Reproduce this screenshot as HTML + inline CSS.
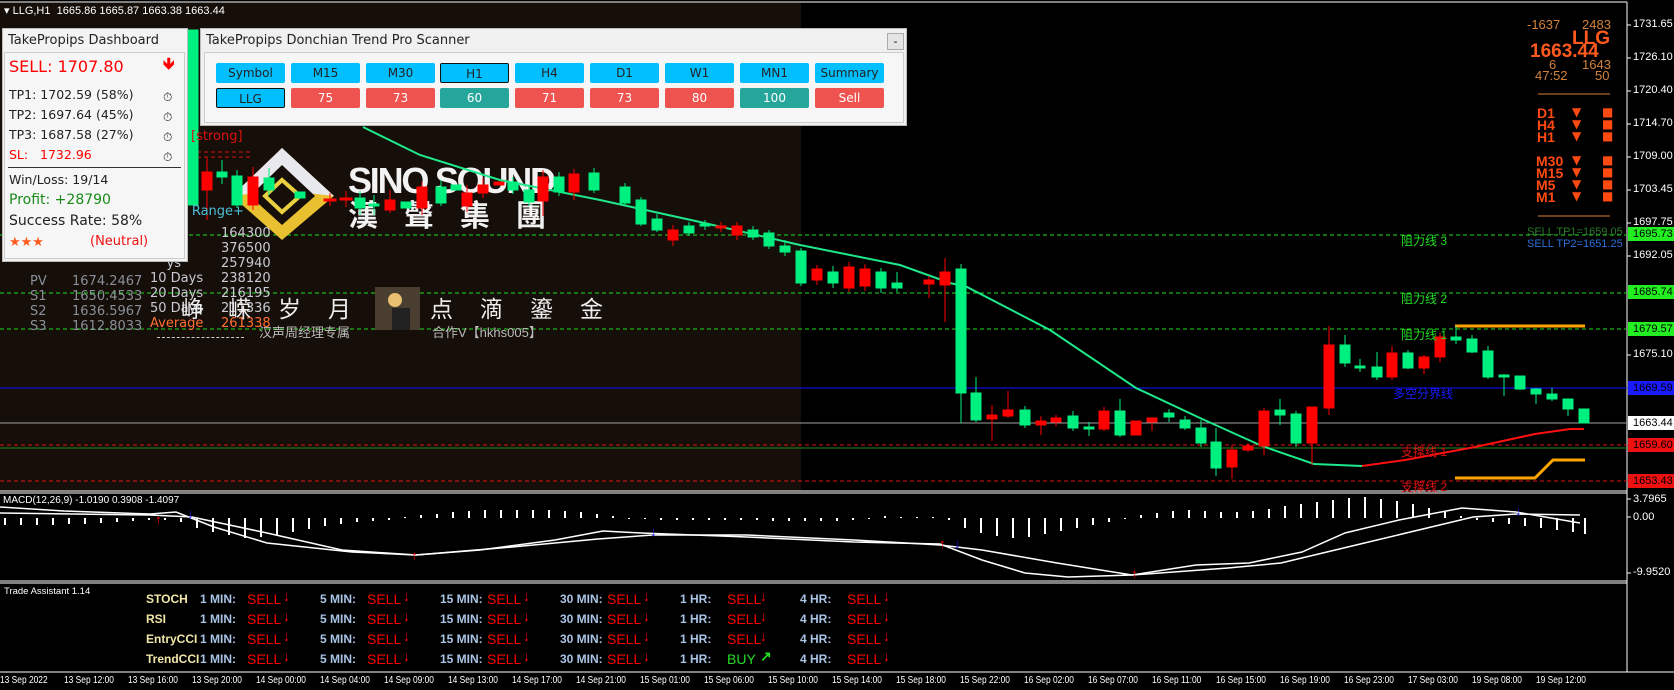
<!DOCTYPE html>
<html><head><meta charset="utf-8"><style>
*{margin:0;padding:0;box-sizing:border-box}
body{width:1674px;height:690px;background:#000;overflow:hidden;position:relative;font-family:"DejaVu Sans","Liberation Sans",sans-serif}
.a{position:absolute;white-space:nowrap;line-height:1}
.ax{font-family:"Liberation Sans",sans-serif;font-size:11px;color:#fff}
.btn{position:absolute;height:20px;width:69px;border-radius:2px;font-size:12px;text-align:center;line-height:20px;color:#222}
.b{background:#00bfff}.r{background:#ef5350;color:#fff}.t{background:#26a69a;color:#fff}
.ta{font-family:"Liberation Sans",sans-serif;font-size:12px;font-weight:bold;color:#aac4e6}
.sl{font-family:"Liberation Sans",sans-serif;font-size:14px;color:#f00}
.lb{color:#f0e6a8}
.tf{font-family:"Liberation Sans",sans-serif;font-size:14px;font-weight:bold;color:#ff4a12}
.tm span{position:absolute;transform:scaleX(0.84);transform-origin:left top}
</style></head><body>
<svg width="1674" height="690" style="position:absolute;left:0;top:0">
<rect x="0" y="3" width="801" height="488" fill="#150e09"/>
<line x1="0" y1="2" x2="1627" y2="2" stroke="#fff"/>
<line x1="1627" y1="2" x2="1627" y2="672" stroke="#fff"/>
<line x1="0" y1="491" x2="1627" y2="491" stroke="#fff"/>
<line x1="0" y1="493" x2="1627" y2="493" stroke="#fff"/>
<line x1="0" y1="581" x2="1627" y2="581" stroke="#fff"/>
<line x1="0" y1="583" x2="1627" y2="583" stroke="#fff"/>
<line x1="0" y1="672" x2="1674" y2="672" stroke="#fff"/>
<g stroke-dasharray="4,3">
<line x1="0" y1="235" x2="1627" y2="235" stroke="#22dd22"/>
<line x1="0" y1="293" x2="1627" y2="293" stroke="#22dd22"/>
<line x1="0" y1="329" x2="1627" y2="329" stroke="#22dd22"/>
<line x1="0" y1="445" x2="1627" y2="445" stroke="#e01010"/>
<line x1="0" y1="481" x2="1627" y2="481" stroke="#e01010"/>
<line x1="190" y1="152" x2="250" y2="152" stroke="#e01010"/>
<line x1="190" y1="157" x2="250" y2="157" stroke="#e01010"/>
</g>
<line x1="0" y1="388" x2="1627" y2="388" stroke="#1010ff"/>
<line x1="0" y1="423" x2="1627" y2="423" stroke="#a0a0a0"/>
<line x1="0" y1="448" x2="1627" y2="448" stroke="#1e8a1e"/>
<g>
<polygon points="282,148 334,196 282,240 232,196" fill="#e8c030"/>
<polygon points="282,148 334,196 282,190 232,196" fill="#e8e8ee"/>
<polygon points="282,165 315,196 282,225 250,196" fill="#150e09"/>
<polygon points="282,180 300,196 282,212 265,196" fill="none" stroke="#e8d040" stroke-width="4"/>
</g>
<text x="348" y="193" font-family="Liberation Sans" font-weight="bold" font-size="36" fill="#f2f2f2" textLength="208">SINO SOUND</text>
<text x="348" y="226" font-family="Noto Sans CJK TC" font-weight="bold" font-size="30" fill="#f2f2f2" letter-spacing="26">漢聲集團</text>
<polyline fill="none" stroke="#1ee88a" stroke-width="2" points="363,127 420,155 500,180 600,200 700,222 800,245 900,265 950,283 967,287 1050,330 1136,388 1200,418 1262,446 1314,464 1362,466"/>
<polyline fill="none" stroke="#ff1010" stroke-width="2" points="1362,466 1405,460 1475,447 1535,434 1570,429 1584,429"/>
<polyline fill="none" stroke="#ffa500" stroke-width="3" points="1455,326 1585,326"/>
<polyline fill="none" stroke="#ffa500" stroke-width="3" points="1455,478 1535,478 1553,460 1585,460"/>
<g stroke-width="1">
<g fill="#00f080" stroke="#00f080">
<line x1="961" y1="264" x2="961" y2="423"/><rect x="956" y="269" width="10" height="124"/>
<line x1="976" y1="377" x2="976" y2="422"/><rect x="971" y="393" width="10" height="27"/>
<rect x="1020" y="410" width="10" height="15"/><line x1="1025" y1="406" x2="1025" y2="428"/>
<rect x="1068" y="416" width="10" height="12"/><line x1="1073" y1="411" x2="1073" y2="431"/>
<rect x="1084" y="427" width="10" height="2"/><line x1="1089" y1="422" x2="1089" y2="436"/>
<rect x="1115" y="411" width="10" height="24"/><line x1="1120" y1="399" x2="1120" y2="437"/>
<rect x="1164" y="413" width="10" height="4"/><line x1="1169" y1="409" x2="1169" y2="422"/>
<rect x="1180" y="420" width="10" height="8"/><line x1="1185" y1="416" x2="1185" y2="430"/>
<rect x="1196" y="428" width="10" height="15"/><line x1="1201" y1="420" x2="1201" y2="447"/>
<rect x="1211" y="442" width="10" height="26"/><line x1="1216" y1="428" x2="1216" y2="476"/>
<rect x="1275" y="410" width="10" height="5"/><line x1="1280" y1="399" x2="1280" y2="425"/>
<rect x="1291" y="414" width="10" height="29"/><line x1="1296" y1="411" x2="1296" y2="447"/>
<rect x="1340" y="345" width="10" height="18"/><line x1="1345" y1="335" x2="1345" y2="367"/>
<rect x="1355" y="366" width="10" height="2"/><line x1="1360" y1="359" x2="1360" y2="372"/>
<rect x="1372" y="367" width="10" height="10"/><line x1="1377" y1="352" x2="1377" y2="380"/>
<rect x="1403" y="353" width="10" height="15"/><line x1="1408" y1="350" x2="1408" y2="369"/>
<rect x="1451" y="337" width="10" height="3"/><line x1="1456" y1="326" x2="1456" y2="344"/>
<rect x="1467" y="339" width="10" height="13"/><line x1="1472" y1="335" x2="1472" y2="353"/>
<rect x="1483" y="351" width="10" height="26"/><line x1="1488" y1="346" x2="1488" y2="379"/>
<rect x="1499" y="375" width="10" height="2"/><line x1="1504" y1="374" x2="1504" y2="396"/>
<rect x="1515" y="376" width="10" height="13"/><line x1="1520" y1="376" x2="1520" y2="390"/>
<rect x="1531" y="389" width="10" height="5"/><line x1="1536" y1="388" x2="1536" y2="404"/>
<rect x="1547" y="394" width="10" height="5"/><line x1="1552" y1="388" x2="1552" y2="401"/>
<rect x="1563" y="399" width="10" height="10"/><line x1="1568" y1="399" x2="1568" y2="416"/>
<rect x="1579" y="409" width="10" height="14"/>
<rect x="892" y="283" width="10" height="5"/><line x1="897" y1="272" x2="897" y2="292"/>
<rect x="876" y="272" width="10" height="16"/><line x1="881" y1="268" x2="881" y2="293"/>
<rect x="828" y="272" width="10" height="11"/><line x1="833" y1="266" x2="833" y2="288"/>
<rect x="796" y="251" width="10" height="32"/><line x1="801" y1="248" x2="801" y2="286"/>
<rect x="780" y="246" width="10" height="6"/><line x1="785" y1="240" x2="785" y2="256"/>
<rect x="764" y="233" width="10" height="13"/><line x1="769" y1="230" x2="769" y2="249"/>
<rect x="748" y="230" width="10" height="7"/><line x1="753" y1="226" x2="753" y2="240"/>
<rect x="700" y="224" width="10" height="2"/><line x1="705" y1="220" x2="705" y2="230"/>
<rect x="684" y="226" width="10" height="7"/><line x1="689" y1="222" x2="689" y2="236"/>
<rect x="652" y="219" width="10" height="11"/><line x1="657" y1="214" x2="657" y2="232"/>
<rect x="636" y="200" width="10" height="24"/><line x1="641" y1="197" x2="641" y2="226"/>
<rect x="620" y="187" width="10" height="16"/><line x1="625" y1="183" x2="625" y2="206"/>
<rect x="589" y="173" width="10" height="17"/><line x1="594" y1="168" x2="594" y2="193"/>
<rect x="554" y="177" width="10" height="15"/><line x1="559" y1="172" x2="559" y2="196"/>
<rect x="524" y="190" width="10" height="12"/><line x1="529" y1="185" x2="529" y2="206"/>
<rect x="508" y="182" width="10" height="8"/><line x1="513" y1="177" x2="513" y2="194"/>
<rect x="451" y="185" width="10" height="5"/>
<rect x="436" y="187" width="10" height="16"/><line x1="441" y1="180" x2="441" y2="206"/>
<rect x="401" y="202" width="10" height="6"/>
<rect x="369" y="204" width="10" height="2"/><line x1="374" y1="195" x2="374" y2="215"/>
<rect x="355" y="198" width="10" height="10"/><line x1="360" y1="191" x2="360" y2="215"/>
<rect x="295" y="192" width="10" height="6"/>
<rect x="264" y="178" width="10" height="12"/><line x1="269" y1="168" x2="269" y2="195"/>
<rect x="232" y="176" width="10" height="29"/><line x1="237" y1="170" x2="237" y2="208"/>
<rect x="217" y="172" width="10" height="5"/><line x1="222" y1="160" x2="222" y2="184"/>
<rect x="188" y="30" width="10" height="175"/>
</g>
<g fill="#ff0000" stroke="#ff0000">
<rect x="987" y="415" width="10" height="4"/><line x1="992" y1="405" x2="992" y2="441"/>
<rect x="1003" y="410" width="10" height="6"/><line x1="1008" y1="391" x2="1008" y2="418"/>
<rect x="1036" y="421" width="10" height="4"/><line x1="1041" y1="416" x2="1041" y2="435"/>
<rect x="1051" y="418" width="10" height="4"/><line x1="1056" y1="415" x2="1056" y2="426"/>
<rect x="1099" y="411" width="10" height="18"/><line x1="1104" y1="407" x2="1104" y2="431"/>
<rect x="1131" y="421" width="10" height="14"/>
<rect x="1147" y="418" width="10" height="4"/><line x1="1152" y1="418" x2="1152" y2="431"/>
<rect x="1227" y="450" width="10" height="17"/><line x1="1232" y1="445" x2="1232" y2="479"/>
<rect x="1243" y="446" width="10" height="4"/><line x1="1248" y1="443" x2="1248" y2="452"/>
<rect x="1259" y="411" width="10" height="35"/><line x1="1264" y1="408" x2="1264" y2="455"/>
<rect x="1307" y="407" width="10" height="36"/><line x1="1312" y1="407" x2="1312" y2="465"/>
<rect x="1324" y="345" width="10" height="63"/><line x1="1329" y1="326" x2="1329" y2="415"/>
<rect x="1387" y="353" width="10" height="24"/><line x1="1392" y1="346" x2="1392" y2="380"/>
<rect x="1419" y="357" width="10" height="11"/><line x1="1424" y1="355" x2="1424" y2="374"/>
<rect x="1435" y="337" width="10" height="20"/><line x1="1440" y1="333" x2="1440" y2="362"/>
<rect x="940" y="272" width="10" height="13"/><line x1="945" y1="258" x2="945" y2="322"/>
<rect x="924" y="280" width="10" height="4"/><line x1="929" y1="276" x2="929" y2="298"/>
<rect x="860" y="269" width="10" height="17"/><line x1="865" y1="264" x2="865" y2="291"/>
<rect x="844" y="267" width="10" height="21"/><line x1="849" y1="262" x2="849" y2="292"/>
<rect x="812" y="269" width="10" height="11"/><line x1="817" y1="265" x2="817" y2="285"/>
<rect x="732" y="226" width="10" height="9"/><line x1="737" y1="222" x2="737" y2="240"/>
<rect x="716" y="226" width="10" height="2"/><line x1="721" y1="222" x2="721" y2="232"/>
<rect x="668" y="230" width="10" height="10"/><line x1="673" y1="225" x2="673" y2="246"/>
<rect x="569" y="174" width="10" height="18"/><line x1="574" y1="169" x2="574" y2="200"/>
<rect x="538" y="177" width="10" height="24"/><line x1="543" y1="170" x2="543" y2="216"/>
<rect x="494" y="182" width="10" height="3"/>
<rect x="478" y="185" width="10" height="8"/><line x1="483" y1="178" x2="483" y2="198"/>
<rect x="462" y="193" width="10" height="13"/><line x1="467" y1="185" x2="467" y2="212"/>
<rect x="417" y="187" width="10" height="21"/><line x1="422" y1="182" x2="422" y2="215"/>
<rect x="385" y="200" width="10" height="10"/><line x1="390" y1="190" x2="390" y2="213"/>
<rect x="340" y="198" width="12" height="2"/><line x1="346" y1="191" x2="346" y2="207"/>
<rect x="324" y="199" width="12" height="2"/><line x1="330" y1="193" x2="330" y2="206"/>
<rect x="248" y="177" width="10" height="28"/><line x1="253" y1="167" x2="253" y2="210"/>
<rect x="202" y="172" width="10" height="18"/><line x1="207" y1="158" x2="207" y2="220"/>
</g>
</g>
<g stroke="#fff" stroke-width="2">
<path d="M5 518v7M21 518v7M37 518v7M53 518v7M69 518v6M85 518v6M101 518v5M117 518v4M133 518v3M149 518v2M165 518v2M181 518v4M197 518v10M213 518v14M229 518v17M245 518v20M261 518v19M277 518v17M293 518v14M309 518v11M325 518v8M341 518v6M357 518v4M373 518v3M389 518v2M405 518v-1M421 518v-3M437 518v-4M453 518v-6M469 518v-7M485 518v-8M501 518v-8M517 518v-8M533 518v-8M549 518v-8M565 518v-7M581 518v-6M597 518v-4M613 518v-2M629 518v1M645 518v1M661 518v2M677 518v2M693 518v2M709 518v2M725 518v2M741 518v2M757 518v2M773 518v3M789 518v3M805 518v3M821 518v3M837 518v3M853 518v2M869 518v1M885 518v-2M901 518v-1M917 518v-1M933 518v-1M949 518v2M965 518v10M981 518v15M997 518v18M1013 518v20M1029 518v19M1045 518v16M1061 518v13M1077 518v10M1093 518v7M1109 518v4M1125 518v1M1141 518v-3M1157 518v-5M1173 518v-7M1189 518v-8M1205 518v-7M1221 518v-6M1237 518v-6M1253 518v-7M1269 518v-9M1285 518v-12M1301 518v-14M1317 518v-16M1333 518v-18M1349 518v-20M1365 518v-21M1381 518v-19M1397 518v-17M1413 518v-14M1429 518v-10M1445 518v-6M1461 518v-2M1477 518v2M1493 518v4M1509 518v6M1525 518v8M1541 518v10M1557 518v12M1573 518v14M1585 518v16"/>
</g>
<polyline fill="none" stroke="#fff" stroke-width="1.5" points="0,507 64,511 150,514 176,512 214,527 267,543 352,552 416,555 480,550 555,540 603,531 641,533 747,537 854,542 940,544 982,560 1025,573 1068,577 1132,575 1196,565 1249,563 1302,552 1345,533 1399,520 1462,508 1516,512 1580,523"/>
<polyline fill="none" stroke="#fff" stroke-width="1.5" points="0,513 150,515 192,517 267,533 342,550 416,555 512,547 598,539 653,535 747,535 854,540 940,545 982,550 1057,563 1132,575 1228,568 1281,563 1377,540 1473,517 1516,514 1580,515"/>
<g font-family="Liberation Sans" font-size="13" font-weight="bold">
<text x="155" y="524" fill="#f00">↑</text><text x="187" y="518" fill="#22f">↓</text>
<text x="411" y="560" fill="#f00">↑</text><text x="650" y="536" fill="#22f">↓</text>
<text x="939" y="548" fill="#f00">↑</text><text x="954" y="548" fill="#22f">↓</text>
<text x="1131" y="578" fill="#f00">↑</text><text x="1515" y="515" fill="#22f">↓</text>
</g>
<rect x="1628" y="227" width="46" height="14" fill="#22ee22"/>
<rect x="1628" y="285" width="46" height="14" fill="#22ee22"/>
<rect x="1628" y="322" width="46" height="14" fill="#22ee22"/>
<rect x="1628" y="381" width="46" height="14" fill="#1a1aff"/>
<rect x="1628" y="416" width="46" height="14" fill="#fff"/>
<rect x="1628" y="438" width="46" height="14" fill="#ee1111"/>
<rect x="1628" y="474" width="46" height="14" fill="#ee1111"/>
<g stroke="#fff"><path d="M1627 25h4M1627 58h4M1627 91h4M1627 124h4M1627 157h4M1627 190h4M1627 223h4M1627 256h4M1627 355h4M1627 499h4M1627 517h4M1627 573h4"/></g>
<line x1="1538" y1="94" x2="1610" y2="94" stroke="#d8843c"/>
<line x1="1538" y1="216" x2="1610" y2="216" stroke="#d8843c"/>
<rect x="375" y="287" width="45" height="43" fill="#4a3e30"/>
<circle cx="395" cy="300" r="7" fill="#e8c070"/>
<rect x="392" y="308" width="18" height="22" fill="#222"/>
</svg>

<div class="a ax" style="left:4px;top:6px;font-size:11px">▾ LLG,H1&nbsp; 1665.86 1665.87 1663.38 1663.44</div>

<div class="a ax" style="left:1633px;top:19px">1731.65</div>
<div class="a ax" style="left:1633px;top:52px">1726.10</div>
<div class="a ax" style="left:1633px;top:85px">1720.40</div>
<div class="a ax" style="left:1633px;top:118px">1714.70</div>
<div class="a ax" style="left:1633px;top:151px">1709.00</div>
<div class="a ax" style="left:1633px;top:184px">1703.45</div>
<div class="a ax" style="left:1633px;top:217px">1697.75</div>
<div class="a ax" style="left:1633px;top:229px;color:#000">1695.73</div>
<div class="a ax" style="left:1633px;top:250px">1692.05</div>
<div class="a ax" style="left:1633px;top:287px;color:#000">1685.74</div>
<div class="a ax" style="left:1633px;top:324px;color:#000">1679.57</div>
<div class="a ax" style="left:1633px;top:349px">1675.10</div>
<div class="a ax" style="left:1633px;top:383px;color:#000">1669.59</div>
<div class="a ax" style="left:1633px;top:418px;color:#000">1663.44</div>
<div class="a ax" style="left:1633px;top:440px;color:#000">1659.60</div>
<div class="a ax" style="left:1633px;top:476px;color:#000">1653.43</div>
<div class="a ax" style="left:1633px;top:494px">3.7965</div>
<div class="a ax" style="left:1633px;top:512px">0.00</div>
<div class="a ax" style="left:1633px;top:567px">-9.9520</div>

<div class="a" style="left:1527px;top:18px;font-family:'Liberation Sans';font-size:13px;color:#d2823c">-1637</div>
<div class="a" style="left:1582px;top:18px;font-family:'Liberation Sans';font-size:13px;color:#d2823c">2483</div>
<div class="a" style="left:1572px;top:29px;font-family:'Liberation Sans';font-size:19px;font-weight:bold;color:#ff5a1e">LLG</div>
<div class="a" style="left:1530px;top:42px;font-family:'Liberation Sans';font-size:19px;font-weight:bold;color:#ff5a1e">1663.44</div>
<div class="a" style="left:1549px;top:58px;font-family:'Liberation Sans';font-size:13px;color:#d2823c">6</div>
<div class="a" style="left:1582px;top:58px;font-family:'Liberation Sans';font-size:13px;color:#d2823c">1643</div>
<div class="a" style="left:1535px;top:69px;font-family:'Liberation Sans';font-size:13px;color:#d2823c">47:52</div>
<div class="a" style="left:1595px;top:69px;font-family:'Liberation Sans';font-size:13px;color:#d2823c">50</div>
<div class="a tf" style="left:1537px;top:106px">D1</div>
<div class="a tf" style="left:1537px;top:118px">H4</div>
<div class="a tf" style="left:1537px;top:130px">H1</div>
<div class="a tf" style="left:1536px;top:154px">M30</div>
<div class="a tf" style="left:1536px;top:166px">M15</div>
<div class="a tf" style="left:1536px;top:178px">M5</div>
<div class="a tf" style="left:1536px;top:190px">M1</div>
<div class="a" style="left:1572px;top:106px;font-size:12px;color:#ff4a12;line-height:12px">▼<br>▼<br>▼<br><br>▼<br>▼<br>▼<br>▼</div>
<div class="a" style="left:1602px;top:106px;font-size:12px;color:#ff4a12;line-height:12px">■<br>■<br>■<br><br>■<br>■<br>■<br>■</div>
<div class="a" style="left:1527px;top:227px;font-family:'Liberation Sans';font-size:11px;color:#2a7a2a">SELL TP1=1659.05</div>
<div class="a" style="left:1527px;top:239px;font-family:'Liberation Sans';font-size:11px;color:#2b6fd8">SELL TP2=1651.25</div>

<div class="a" style="left:1401px;top:235px;font-size:12px;color:#22dd22;font-family:'Liberation Sans','Noto Sans CJK SC',sans-serif">阻力线 3</div>
<div class="a" style="left:1401px;top:293px;font-size:12px;color:#22dd22;font-family:'Liberation Sans','Noto Sans CJK SC',sans-serif">阻力线 2</div>
<div class="a" style="left:1401px;top:329px;font-size:12px;color:#22dd22;font-family:'Liberation Sans','Noto Sans CJK SC',sans-serif">阻力线 1</div>
<div class="a" style="left:1393px;top:388px;font-size:12px;color:#1a1aff;font-family:'Liberation Sans','Noto Sans CJK SC',sans-serif">多空分界线</div>
<div class="a" style="left:1401px;top:446px;font-size:12px;color:#e01010;font-family:'Liberation Sans','Noto Sans CJK SC',sans-serif">支撑线 1</div>
<div class="a" style="left:1401px;top:481px;font-size:12px;color:#e01010;font-family:'Liberation Sans','Noto Sans CJK SC',sans-serif">支撑线 2</div>

<div class="a" style="left:191px;top:130px;font-size:13px;color:#e01010">[strong]</div>
<div class="a" style="left:180px;top:205px;font-size:13px;color:#4cc0d8">y Range+</div>
<div class="a" style="left:150px;top:226px;font-size:13px;color:#c8cbd3;line-height:15px">&nbsp;&nbsp;&nbsp;&nbsp;&nbsp;y<br>&nbsp;&nbsp;&nbsp;&nbsp;&nbsp;y<br>&nbsp;&nbsp;&nbsp;&nbsp;ys<br>10 Days<br>20 Days<br>50 Days<br><span style="color:#ff7030">Average</span></div>
<div class="a" style="left:221px;top:226px;font-size:13px;color:#c8cbd3;line-height:15px">164300<br>376500<br>257940<br>238120<br>216195<br>211336<br><span style="color:#ff7030">261338</span></div>
<div class="a" style="left:30px;top:274px;font-size:13px;color:#8a8f99;line-height:15px">PV<br>S1<br>S2<br>S3</div>
<div class="a" style="left:72px;top:274px;font-size:13px;color:#8a8f99;line-height:15px">1674.2467<br>1650.4533<br>1636.5967<br>1612.8033</div>
<div class="a" style="left:157px;top:337px;width:87px;border-top:1px dashed #ccc"></div>
<div class="a" style="left:181px;top:296px;font-size:23px;color:#eee;font-family:'Noto Sans CJK SC',sans-serif">峥</div>
<div class="a" style="left:228px;top:296px;font-size:23px;color:#eee;font-family:'Noto Sans CJK SC',sans-serif">嵘</div>
<div class="a" style="left:278px;top:296px;font-size:23px;color:#eee;font-family:'Noto Sans CJK SC',sans-serif">岁</div>
<div class="a" style="left:328px;top:296px;font-size:23px;color:#eee;font-family:'Noto Sans CJK SC',sans-serif">月</div>
<div class="a" style="left:430px;top:296px;font-size:23px;color:#eee;font-family:'Noto Sans CJK SC',sans-serif">点</div>
<div class="a" style="left:480px;top:296px;font-size:23px;color:#eee;font-family:'Noto Sans CJK SC',sans-serif">滴</div>
<div class="a" style="left:530px;top:296px;font-size:23px;color:#eee;font-family:'Noto Sans CJK SC',sans-serif">鎏</div>
<div class="a" style="left:580px;top:296px;font-size:23px;color:#eee;font-family:'Noto Sans CJK SC',sans-serif">金</div>
<div class="a" style="left:259px;top:326px;font-size:13px;color:#bbb;font-family:'Liberation Sans','Noto Sans CJK SC',sans-serif">汉声周经理专属</div>
<div class="a" style="left:432px;top:326px;font-size:13px;color:#bbb;font-family:'Liberation Sans','Noto Sans CJK SC',sans-serif">合作V【hkhs005】</div>

<div class="a" style="left:2px;top:28px;width:186px;height:234px;background:#f3f3f3;border:1px solid #bbb"></div>
<div class="a" style="left:4px;top:52px;width:181px;height:207px;border:1px solid #ccc;background:#f6f6f6"></div>
<div class="a" style="left:8px;top:34px;font-size:13px;color:#222">TakePropips Dashboard</div>
<div class="a" style="left:9px;top:59px;font-size:16px;color:#f00">SELL: 1707.80</div>
<div class="a" style="left:163px;top:56px;font-size:16px;color:#f00;font-weight:bold">🡻</div>
<div class="a" style="left:9px;top:85px;font-size:12.5px;color:#222;line-height:20px">TP1: 1702.59 (58%)<br>TP2: 1697.64 (45%)<br>TP3: 1687.58 (27%)<br><span style="color:#f00">SL:&nbsp;&nbsp; 1732.96</span></div>
<div class="a" style="left:163px;top:87px;font-size:12px;color:#222;line-height:20px">⏱<br>⏱<br>⏱<br>⏱</div>
<div class="a" style="left:8px;top:167px;width:173px;border-top:1px solid #333"></div>
<div class="a" style="left:9px;top:174px;font-size:12.5px;color:#222">Win/Loss: 19/14</div>
<div class="a" style="left:9px;top:193px;font-size:14px;color:#1a8a1a">Profit: +28790</div>
<div class="a" style="left:9px;top:214px;font-size:14px;color:#222">Success Rate: 58%</div>
<div class="a" style="left:9px;top:236px;font-size:13px;color:#ff5a1e">★★★</div>
<div class="a" style="left:90px;top:235px;font-size:13px;color:#f01010">(Neutral)</div>

<div class="a" style="left:200px;top:28px;width:707px;height:98px;background:#f0f0f0;border:1px solid #bbb"></div>
<div class="a" style="left:204px;top:52px;width:700px;height:71px;background:#f6f6f6;border:1px solid #ccc"></div>
<div class="a" style="left:206px;top:34px;font-size:13px;color:#222">TakePropips Donchian Trend Pro Scanner</div>
<div class="a" style="left:887px;top:33px;width:17px;height:17px;border:1px solid #aaa;background:#e4e4e4;font-size:11px;text-align:center;line-height:15px">-</div>
<div class="btn b" style="left:216px;top:63px">Symbol</div>
<div class="btn b" style="left:291px;top:63px">M15</div>
<div class="btn b" style="left:366px;top:63px">M30</div>
<div class="btn b" style="left:440px;top:63px;border:1px solid #111">H1</div>
<div class="btn b" style="left:515px;top:63px">H4</div>
<div class="btn b" style="left:590px;top:63px">D1</div>
<div class="btn b" style="left:665px;top:63px">W1</div>
<div class="btn b" style="left:740px;top:63px">MN1</div>
<div class="btn b" style="left:815px;top:63px">Summary</div>
<div class="btn b" style="left:216px;top:88px;border:1px solid #111">LLG</div>
<div class="btn r" style="left:291px;top:88px">75</div>
<div class="btn r" style="left:366px;top:88px">73</div>
<div class="btn t" style="left:440px;top:88px">60</div>
<div class="btn r" style="left:515px;top:88px">71</div>
<div class="btn r" style="left:590px;top:88px">73</div>
<div class="btn r" style="left:665px;top:88px">80</div>
<div class="btn t" style="left:740px;top:88px">100</div>
<div class="btn r" style="left:815px;top:88px">Sell</div>

<div class="a" style="left:3px;top:496px;font-family:'Liberation Sans';font-size:10px;color:#fff">MACD(12,26,9) -1.0190 0.3908 -1.4097</div>

<div class="a" style="left:4px;top:587px;font-family:'Liberation Sans';font-size:9.5px;color:#fff">Trade Assistant 1.14</div>
<div class="a ta lb" style="left:146px;top:589px;line-height:20px">STOCH<br>RSI<br>EntryCCI<br>TrendCCI</div>
<div class="a ta" style="left:200px;top:589px;line-height:20px">1 MIN:<br>1 MIN:<br>1 MIN:<br>1 MIN:</div>
<div class="a ta" style="left:320px;top:589px;line-height:20px">5 MIN:<br>5 MIN:<br>5 MIN:<br>5 MIN:</div>
<div class="a ta" style="left:440px;top:589px;line-height:20px">15 MIN:<br>15 MIN:<br>15 MIN:<br>15 MIN:</div>
<div class="a ta" style="left:560px;top:589px;line-height:20px">30 MIN:<br>30 MIN:<br>30 MIN:<br>30 MIN:</div>
<div class="a ta" style="left:680px;top:589px;line-height:20px">1 HR:<br>1 HR:<br>1 HR:<br>1 HR:</div>
<div class="a ta" style="left:800px;top:589px;line-height:20px">4 HR:<br>4 HR:<br>4 HR:<br>4 HR:</div>
<div class="a sl" style="left:247px;top:589px;line-height:20px">SELL<br>SELL<br>SELL<br>SELL</div>
<div class="a sl" style="left:367px;top:589px;line-height:20px">SELL<br>SELL<br>SELL<br>SELL</div>
<div class="a sl" style="left:487px;top:589px;line-height:20px">SELL<br>SELL<br>SELL<br>SELL</div>
<div class="a sl" style="left:607px;top:589px;line-height:20px">SELL<br>SELL<br>SELL<br>SELL</div>
<div class="a sl" style="left:727px;top:589px;line-height:20px">SELL<br>SELL<br>SELL<br><span style="color:#22dd22">BUY</span></div>
<div class="a sl" style="left:847px;top:589px;line-height:20px">SELL<br>SELL<br>SELL<br>SELL</div>
<div class="a sl" style="left:283px;top:586px;line-height:20px;font-weight:bold">↓<br>↓<br>↓<br>↓</div>
<div class="a sl" style="left:403px;top:586px;line-height:20px;font-weight:bold">↓<br>↓<br>↓<br>↓</div>
<div class="a sl" style="left:523px;top:586px;line-height:20px;font-weight:bold">↓<br>↓<br>↓<br>↓</div>
<div class="a sl" style="left:643px;top:586px;line-height:20px;font-weight:bold">↓<br>↓<br>↓<br>↓</div>
<div class="a sl" style="left:760px;top:586px;line-height:20px;font-weight:bold">↓<br>↓<br>↓<br><span style="color:#22dd22">↗</span></div>
<div class="a sl" style="left:883px;top:586px;line-height:20px;font-weight:bold">↓<br>↓<br>↓<br>↓</div>

<div class="a ax tm" style="left:0;top:676px;font-size:10px">
<span style="left:0">13 Sep 2022</span><span style="left:64px">13 Sep 12:00</span><span style="left:128px">13 Sep 16:00</span><span style="left:192px">13 Sep 20:00</span><span style="left:256px">14 Sep 00:00</span><span style="left:320px">14 Sep 04:00</span><span style="left:384px">14 Sep 09:00</span><span style="left:448px">14 Sep 13:00</span><span style="left:512px">14 Sep 17:00</span><span style="left:576px">14 Sep 21:00</span><span style="left:640px">15 Sep 01:00</span><span style="left:704px">15 Sep 06:00</span><span style="left:768px">15 Sep 10:00</span><span style="left:832px">15 Sep 14:00</span><span style="left:896px">15 Sep 18:00</span><span style="left:960px">15 Sep 22:00</span><span style="left:1024px">16 Sep 02:00</span><span style="left:1088px">16 Sep 07:00</span><span style="left:1152px">16 Sep 11:00</span><span style="left:1216px">16 Sep 15:00</span><span style="left:1280px">16 Sep 19:00</span><span style="left:1344px">16 Sep 23:00</span><span style="left:1408px">17 Sep 03:00</span><span style="left:1472px">19 Sep 08:00</span><span style="left:1536px">19 Sep 12:00</span>
</div>
</body></html>
